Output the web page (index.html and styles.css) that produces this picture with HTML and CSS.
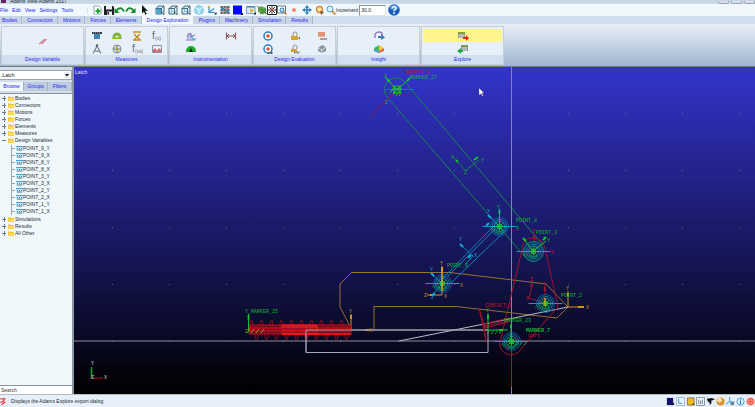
FILE: index.html
```html
<!DOCTYPE html>
<html lang="en">
<head>
<meta charset="utf-8">
<title>Adams View Adams 2017</title>
<link rel="stylesheet" href="styles.css">
</head>
<body>
<svg class="defs" aria-hidden="true">
  <symbol id="folder" viewBox="0 0 6 5"><path d="M0 .5h2.5l.7.6H6V5H0z" fill="#f2c230"/><path d="M.5 2H6V4.6H.5z" fill="#ffdc60"/></symbol>
  <symbol id="var" viewBox="0 0 7 5"><path d="M0 0h7v5H0z" fill="#c6e6f6"/><path d="M0 0h7v1H0z" fill="#4a9fd8"/><path d="M1 2.5h1m1 0h1m1 0h1M1 4h5" stroke="#4b6b82" stroke-width=".8"/></symbol>
  <symbol id="cube" viewBox="0 0 10 10"><path d="M1 3.5h5.5V9H1zM1 3.5 3.5 1H9L6.5 3.5M9 1v5.500L6.500 9" fill="#d8f0fa" stroke="#35566b" stroke-width=".9"/><path d="M3.500 1v5.500H9M3.500 6.500 1 9" stroke="#4b9cc0" stroke-width=".6" fill="none"/><path d="M7.500 9.500h2v-2z" fill="#111"/></symbol>
  <symbol id="hub" viewBox="-18 -12 36 24" overflow="visible"><g fill="none"><path d="M-17 0H17" stroke="#0c9fc4"/><circle r="9" stroke="#086fae" stroke-width=".8"/><circle r="7" stroke="#10a2c4" stroke-width=".8"/><circle r="5" stroke="#10b59b" stroke-width=".8"/><circle r="2.600" stroke="#10d040"/><path d="M-3-3 3 3M3-3-3 3M-4 0h8M0-4v8" stroke="#10d040" stroke-width=".8"/><path d="m-10 4 2-3m0 4 2-3m0 4 2-3m0 4 2-3m0 3 2-3m0 3 2-3m0 3 2-3" stroke="#089a32" stroke-width=".8"/></g></symbol>
  <symbol id="calc" viewBox="0 0 12 10"><path d="M1 1h7v6H1z" fill="#8b9b94"/><path d="M1 1h7v2H1z" fill="#829b45"/><path d="M2 4h5M2 6h5" stroke="#e7edf0" stroke-width=".8"/></symbol>
</svg>

<div class="app">
  <header>
    <div class="titlebar"><span class="logo"></span><span class="title">Adams View Adams 2017</span><span class="winbtns"><button aria-label="Minimize"></button><button aria-label="Maximize"></button><button aria-label="Close"></button></span></div>
    <div class="toolbar">
      <nav class="menu"><a href="#">File</a><a href="#">Edit</a><a href="#">View</a><a href="#">Settings</a><a href="#">Tools</a></nav>
      <div class="tools">
        <button aria-label="New"><svg viewBox="0 0 10 10"><path d="M1 1h5l2 2v6H1z" fill="#fff" stroke="#789" stroke-width=".7"/><path d="M5 3.500v5M2.500 6h5" stroke="#20a830" stroke-width="2"/></svg></button>
        <button aria-label="Save"><svg viewBox="0 0 10 10"><path d="M0 1h9l1 1v8H0z" fill="#222"/><path d="M2 1h6v3.500H2zM3 6.500h5V10H3z" fill="#e9eef2"/><path d="M3.500 7h1.500v2.500H3.500z" fill="#222"/></svg></button>
        <button class="turn" aria-label="Undo"><svg viewBox="0 0 10 10"><path d="M1.500 6Q6 0 9.500 6.500" fill="none" stroke="#158a28" stroke-width="1.700"/><path d="M0 3v5h5z" fill="#158a28"/></svg></button>
        <button class="turn" aria-label="Redo"><svg viewBox="0 0 10 10"><path d="M.5 6.500Q4 0 8.500 6" fill="none" stroke="#158a28" stroke-width="1.700"/><path d="M10 3v5H5z" fill="#158a28"/></svg></button>
        <button class="wide" aria-label="Select"><svg viewBox="0 0 10 10"><path d="m2 0 6 6-3-.2L6.800 9 5.300 9.700 4 6.500 2 8.500z" fill="#111"/></svg></button>
        <button class="pic" aria-label="Front view"><svg viewBox="0 0 10 10"><use href="#cube"/><path d="M1.500 4H6v4.500H1.500z" fill="#41a7d4"/></svg></button>
        <button class="pic" aria-label="Right view"><svg viewBox="0 0 10 10"><use href="#cube"/></svg></button>
        <button class="pic" aria-label="Top view"><svg viewBox="0 0 10 10"><use href="#cube"/></svg></button>
        <button class="pic" aria-label="Isometric view"><svg viewBox="0 0 10 10"><path d="m5 .5 4 2v5l-4 2-4-2v-5z" fill="#9bdcf4" stroke="#55b8dd" stroke-width=".8"/><path d="m1 2.500 4 2 4-2M5 4.500v5" fill="none" stroke="#e8faff"/></svg></button>
        <button class="pic" aria-label="Coordinate system"><svg viewBox="0 0 10 10"><path d="M2 1v6.500h6M2 7.500l5-4" fill="none" stroke="#3b91c4" stroke-width="1.200"/><path d="m.5 2.500 1.500-2 1.500 2z" fill="#e7a52b"/><path d="M7 9.500h2.500V7z" fill="#111"/></svg></button>
        <button class="pic" aria-label="Grid"><svg viewBox="0 0 10 10"><path d="M0 2h10M0 5h10M0 8h10M2 1v8M5 1v8M8 1v8" stroke="#345" stroke-width="1"/><path d="M1 3h3v2H1zM6 5h3v2H6z" fill="#388bc0"/><path d="m5 2 3 2M2 8l3-2" stroke="#d06d42"/></svg></button>
        <button class="pic" aria-label="Background color"><svg viewBox="0 0 10 10"><path d="M0 .5h9v9H0z" fill="#0505ff"/><path d="M7.500 10H10V7.500z" fill="#111"/></svg></button>
        <button class="pic" aria-label="Layout"><svg viewBox="0 0 10 10"><path d="M.5 1.500h8.500v7H.5z" fill="#d4e8f3" stroke="#6b8ba1" stroke-width=".8"/><path d="M1 1h8v1.600H1z" fill="#4f8dbd"/><path d="M4 4h3v3H4z" fill="#f1b535"/><path d="M7.500 9.500H10V7z" fill="#111"/></svg></button>
        <button class="snug" aria-label="Shade"><svg viewBox="0 0 10 10"><path d="m1 3 3-2 5 2v5L6 9.500 1 7z" fill="#62a84b"/><path d="m0 1 10 8M3 9l6-5" stroke="#477c39"/></svg></button>
        <button class="snug" aria-label="Fit"><svg viewBox="0 0 10 10"><path d="M.5.5h9v9h-9z" fill="#fff" stroke="#222"/><path d="m2 2 6 6M8 2 2 8M5 1v8M1 5h8" stroke="#272727" stroke-width=".9"/><path d="M4 4h2v2H4z" fill="#e43b32"/></svg></button>
        <button class="snug" aria-label="Zoom box"><svg viewBox="0 0 10 10"><path d="M.5 1h8v7h-8z" fill="#fff" stroke="#456" stroke-width=".8"/><circle cx="5" cy="5" r="2" fill="#bce4fb" stroke="#2b78b3"/><path d="m6.500 6.500 3 3" stroke="#b17b37" stroke-width="1.300"/></svg></button>
        <button class="pic" aria-label="Center"><svg viewBox="0 0 10 10"><circle cx="5" cy="5" r="2" fill="#f06b55" stroke="#ffc9bd"/></svg></button>
        <button class="pic" aria-label="Pan"><svg viewBox="0 0 10 10"><path d="M5 1v8M1 5h8" stroke="#2b81b7" stroke-width="1.500"/><path d="m3 3 2-3 2 3zM3 7l2 3 2-3zM3 3 0 5l3 2zM7 3l3 2-3 2z" fill="#2b81b7"/></svg></button>
        <button class="pic" aria-label="Rotate"><svg viewBox="0 0 10 10"><circle cx="4.500" cy="4.500" r="3" fill="#ffe2b0" stroke="#d68435" stroke-width="1.400"/><path d="m5 6 4 1-3 3z" fill="#835021"/></svg></button>
        <button class="snug" aria-label="Zoom"><svg viewBox="0 0 10 10"><circle cx="4" cy="4" r="3" fill="#d6f3ff" stroke="#499dce"/><path d="m6 6 3.500 3.500" stroke="#c6923b" stroke-width="1.800"/></svg></button>
        <label for="inc">Increment</label><input id="inc" type="text" value="30.0">
        <button class="help" aria-label="Help"><svg viewBox="0 0 12 12"><circle cx="6" cy="6" r="5.800" fill="#1c5fc2"/><ellipse cx="6" cy="3.500" rx="4" ry="2.500" fill="#5599e6"/><path d="M4 4.500Q4.300 2.700 6.200 2.700 8.200 2.800 8 4.500 7.800 5.500 6.600 6 6 6.300 6 7.500" fill="none" stroke="#fff" stroke-width="1.300"/><circle cx="6" cy="9.200" r=".9" fill="#fff"/></svg></button>
      </div>
    </div>
    <nav class="tabs"><a href="#">Bodies</a><a href="#">Connectors</a><a href="#">Motions</a><a href="#">Forces</a><a href="#">Elements</a><a href="#" class="on">Design Exploration</a><a href="#">Plugins</a><a href="#">Machinery</a><a href="#">Simulation</a><a href="#">Results</a></nav>
    <div class="ribbon">
      <section class="group"><div class="icons one">
        <button aria-label="Design variable"><svg viewBox="0 0 12 10"><path d="m2 8 5-5h3L5 8z" fill="#e7adb4"/><path d="m2 8 6-5M5 8l5-5" stroke="#a95362" stroke-width=".7"/></svg></button></div><h2>Design Variable</h2></section>
      <section class="group"><div class="icons four">
        <button aria-label="Distance"><svg viewBox="0 0 12 10"><path d="M1 1h10v2H1z" fill="#273747"/><path d="M3 3h6v5H3z" fill="#4381b3"/><path d="M2 2h1m1 0h1m1 0h1m1 0h1" stroke="#fff" stroke-width=".7"/></svg></button>
        <button aria-label="Angle"><svg viewBox="0 0 12 10"><path d="M1.500 8V6a4.500 4.500 0 0 1 9 0v2z" fill="#7fb62b"/><path d="M4 6.500a2 1.800 0 0 1 4 0z" fill="#edf5e3"/></svg></button>
        <button aria-label="Average"><svg viewBox="0 0 12 10"><path d="M2 1h8M3 3l6 6M9 3 3 9M2 9h8" stroke="#cc8d24" stroke-width="1.500"/></svg></button>
        <button aria-label="Function"><svg viewBox="0 0 12 10"><text x="1" y="8" class="fx">f</text><text x="4" y="9" class="fs">(x)</text></svg></button>
        <button aria-label="Compass"><svg viewBox="0 0 12 10"><path d="M2 9.500 6 2l4 7.500M3.500 6.500Q6 8 8.500 6.500" fill="none" stroke="#737f88" stroke-width="1.100"/><circle cx="6" cy="1.500" r="1.200" fill="#56636c"/></svg></button>
        <button aria-label="Orientation"><svg viewBox="0 0 12 10"><circle cx="6" cy="5" r="4" fill="#dce3e7" stroke="#82909b"/><path d="M6 1v8M2 5h8" stroke="#68798a"/><path d="M4 3h2v2H4zM6 5h2v2H6z" fill="#c8b63a"/></svg></button>
        <button aria-label="Function measure"><svg viewBox="0 0 12 10"><text x="1" y="8" class="fx">f</text><text x="4" y="9" class="fs">(xs)</text></svg></button>
        <button aria-label="Plot"><svg viewBox="0 0 12 10"><path d="M1.500 1.500h9v7h-9z" fill="#e6edf5" stroke="#8793a4"/><path d="m2 6 2-2 2 3 2-3 2 2v2H2z" fill="#d96763"/></svg></button></div><h2>Measures</h2></section>
      <section class="group"><div class="icons two">
        <button aria-label="Point trace"><svg viewBox="0 0 12 10"><path d="M2 2h4v6H2z" fill="#c3b9e4"/><path d="M1 9h9M2 6q5-8 4 0l4-2" stroke="#8172b8" fill="none"/><path d="M7 4v4h4" stroke="#329fc1" fill="none"/></svg></button>
        <button aria-label="Span"><svg viewBox="0 0 12 10"><path d="M1.500 1.500v7M10.500 1.500v7M2 5h8" stroke="#98534f" stroke-width="1.100"/><path d="m4 3-2 2 2 2m4-4 2 2-2 2" fill="none" stroke="#98534f"/></svg></button>
        <button aria-label="Gauge"><svg viewBox="0 0 12 10"><path d="M1 7a5 5 0 0 1 10 0v1H1z" fill="#1dad29"/><path d="M4 8 6 4l2 4z" fill="#222"/></svg></button></div><h2>Instrumentation</h2></section>
      <section class="group"><div class="icons three">
        <button aria-label="Objective"><svg viewBox="0 0 12 10"><circle cx="6" cy="5" r="4" fill="#fff" stroke="#277ebc" stroke-width="1.500"/><circle cx="6" cy="5" r="1.800" fill="#df5333"/></svg></button>
        <button aria-label="Constraint"><svg viewBox="0 0 12 10"><path d="M4 5V3q0-2 2-2t2 2v2" fill="none" stroke="#929292"/><path d="M2 5h7v4H2z" fill="#dba52d"/><path d="M9 8h2V5z" fill="#68747d"/></svg></button>
        <button aria-label="Report"><svg viewBox="0 0 12 10"><path d="M2 1h7v5H2z" fill="#f2b092"/><path d="M2 2h7M2 4h7" stroke="#d9774f"/><path d="M4 8h7" stroke="#a0a2a4" stroke-width="2"/></svg></button>
        <button aria-label="Objective macro"><svg viewBox="0 0 12 10"><circle cx="6" cy="5" r="4" fill="#fff" stroke="#277ebc" stroke-width="1.500"/><circle cx="6" cy="5" r="1.700" fill="#df5333"/><path d="M6 9h5" stroke="#555" stroke-width="2" stroke-dasharray="1 .5"/></svg></button>
        <button aria-label="Constraint macro"><svg viewBox="0 0 12 10"><path d="M4 5V3q0-2 2-2t2 2v2" fill="none" stroke="#929292"/><path d="M2 5h6v3H2z" fill="#dba52d"/><path d="M5 8.500h6" stroke="#777" stroke-width="2" stroke-dasharray="1 .5"/></svg></button>
        <button aria-label="Evaluate"><svg viewBox="0 0 12 10"><path d="m2 4 4-3 4 2v4L6 9 2 7z" fill="#89969d"/><path d="m2 4 4 2 4-3M6 6v3" stroke="#d8dde0" fill="none"/></svg></button></div><h2>Design Evaluation</h2></section>
      <section class="group"><div class="icons stack">
        <button aria-label="Export insight"><svg viewBox="0 0 12 10"><path d="M2 7q-1-6 4-6 4 0 3 4" fill="none" stroke="#9d7ac4" stroke-width="1.500"/><path d="M5 5h3V3l4 3.500L8 9V7H5z" fill="#427ab6"/></svg></button>
        <button aria-label="Insight results"><svg viewBox="0 0 12 10"><path d="m1 4 5-3v8L1 7z" fill="#42bc61"/><path d="m6 1 5 3-5 3z" fill="#f1cd35"/><path d="m11 4-5 3v2l5-2z" fill="#e86046"/><path d="M1 5l5 2v2L1 7z" fill="#4a9ce0"/></svg></button></div><h2>Insight</h2></section>
      <section class="group"><div class="icons stack">
        <button class="hot" aria-label="Export to Explore"><svg viewBox="0 0 12 10"><use href="#calc"/><path d="M6 6h3V4l3 3-3 3V8H6z" fill="#ed2025"/></svg></button>
        <button aria-label="Import from Explore"><svg viewBox="0 0 12 10"><g transform="translate(3)"><use href="#calc"/></g><path d="M6 6H4V4L0 7l4 3V8h2z" fill="#20a746"/></svg></button></div><h2>Explore</h2></section>
    </div>
  </header>

  <main>
    <aside>
      <div class="picker"><select aria-label="Model"><option>.Latch</option></select><svg viewBox="0 0 6 6"><path d="M0 0h6v6H0z" fill="#e9eef2"/><path d="M1 2h4L3 4.500z" fill="#111"/></svg></div>
      <nav class="sidetabs"><a href="#" class="on">Browse</a><a href="#">Groups</a><a href="#">Filters</a></nav>
      <ul class="tree">
        <li><i class="box"></i><svg class="fold"><use href="#folder"/></svg>Bodies</li>
        <li><i class="box"></i><svg class="fold"><use href="#folder"/></svg>Connectors</li>
        <li><i class="box"></i><svg class="fold"><use href="#folder"/></svg>Motions</li>
        <li><i class="box"></i><svg class="fold"><use href="#folder"/></svg>Forces</li>
        <li><i class="box"></i><svg class="fold"><use href="#folder"/></svg>Elements</li>
        <li><i class="box"></i><svg class="fold"><use href="#folder"/></svg>Measures</li>
        <li><i class="box open"></i><svg class="fold"><use href="#folder"/></svg>Design Variables</li>
        <li class="branch"><ul>
          <li><svg class="var"><use href="#var"/></svg>POINT_9_Y</li>
          <li><svg class="var"><use href="#var"/></svg>POINT_9_X</li>
          <li><svg class="var"><use href="#var"/></svg>POINT_8_Y</li>
          <li><svg class="var"><use href="#var"/></svg>POINT_8_X</li>
          <li><svg class="var"><use href="#var"/></svg>POINT_3_Y</li>
          <li><svg class="var"><use href="#var"/></svg>POINT_3_X</li>
          <li><svg class="var"><use href="#var"/></svg>POINT_2_Y</li>
          <li><svg class="var"><use href="#var"/></svg>POINT_2_X</li>
          <li><svg class="var"><use href="#var"/></svg>POINT_1_Y</li>
          <li><svg class="var"><use href="#var"/></svg>POINT_1_X</li>
        </ul></li>
        <li><i class="box"></i><svg class="fold"><use href="#folder"/></svg>Simulations</li>
        <li><i class="box"></i><svg class="fold"><use href="#folder"/></svg>Results</li>
        <li><i class="box"></i><svg class="fold"><use href="#folder"/></svg>All Other</li>
      </ul>
      <input class="search" type="text" aria-label="Search" placeholder="Search">
    </aside>

    <div class="viewport">
      <svg class="scene" viewBox="74 67 681 327" preserveAspectRatio="xMinYMin slice" role="img" aria-label="Latch model">
        <defs><pattern id="dots" x="112" y="113" width="57" height="57" patternUnits="userSpaceOnUse"><path d="M0 0h1v1H0z" fill="#8f9bd0" opacity=".55"/></pattern></defs>
        <path d="M74 67h681v327H74z" fill="url(#dots)"/>
        <g fill="none">
          <!-- handle link -->
          <g stroke="#178451" stroke-width="1">
            <path d="M387 97 526 258M405 82 542 244M387 97A11 11 0 0 1 405 82"/>
            <path d="M386 89.500h28"/><circle cx="533.500" cy="251.500" r="10"/>
            <path d="M465.500 170.500 453 157m12.500 13.500L479 160"/>
          </g>
          <g stroke="#14c42c"><path d="M397 90 385 77m12 13 13-12"/><path d="m387 79 3 3m17-1 3-3M456 160l2 2m16-2 4-3" stroke-width="1.800"/><circle cx="397" cy="89.500" r="3.500"/><path d="m393 86 8 7m0-7-8 7m-1-4h10M394 85v9m6-9v9"/><path d="m390 93 2-3m1 5 2-3m1 4 2-4m1 4 2-4"/></g>
          <path d="m369 118 17-18 7-6" stroke="#842057"/>
          <!-- datum axes -->
          <path d="M511.500 67v327" stroke="#8383bb"/><path d="M74 341h681" stroke="#8e8e9c"/>
          <path d="M511.500 341v46" stroke="#a41727"/>
          <!-- hook -->
          <g stroke="#967034"><path d="m351.500 329-11.500-22v-23l11.500-11.500H450l96 11.500 22 23-11 11-101-11.500h-82V330"/></g>
          <g stroke="#d39216"><path d="M568 307v-16m0 16h16M442 284v-18m0 29h-15m15 0v-11M351 330v-16m0 16h-1"/><path d="M568 293v3m10 11h6M442 267v4M430 295h3M351 315v4M365 330h4" stroke-width="2"/></g>
          <!-- ground block -->
          <path d="M306 330h182v22.500H306z" stroke="#a9a9b2"/>
          <path d="m399 341 85-17 84-17" stroke="#b9b9c9"/>
          <!-- spring -->
          <path d="M249 330q2.500-20 5 0t5 0 5 0 5 0 5 0 5 0 5 0 5 0 5 0 5 0 5 0 5 0 5 0 5 0 5 0 5 0 5 0 5 0 5 0 5 0" stroke="#980c20"/>
          <path d="M249 325h102v9H249z" fill="#74091b" stroke="#bd1221"/><path d="M249 328h102M249 331h102" stroke="#df1522"/>
          <path d="M282 325h35v9h-35z" fill="#d91422" stroke="#f01822"/><path d="M282 329h35m-35 3h35" stroke="#700b1a"/><path d="M282 334h69" stroke="#ff1717" stroke-width="1.500"/>
          <path d="M306 330h182M306 330v22.500" stroke="#9e9eab"/>
          <path d="M248.500 331v-17" stroke="#13c42c"/><path d="M248.500 315v5" stroke="#13c42c" stroke-width="1.800"/><path d="m247 333 3-4m1 4 3-4m2 4 3-4m2 4 3-4" stroke="#7aa325"/>
          <!-- pivot and slider -->
          <g stroke="#9d152d"><path d="M522 250q0-12 11-12 9 0 12 10l13 59-37 42a11 11 0 0 1-20-11zM532.500 283.500 529 298l17 6M534 251v-17M545 304v-18M479 308l5 17 2 16zM484 324l25-6m-25 8 25-5m-25 7 25-6"/><path d="M534 236v3M545 287v4M532 284l-1 3M483 325l4 3" stroke-width="2"/></g>
          <!-- coupler -->
          <g stroke="#0a87b5"><path d="m495 225-54 55m65-50-56 54m45-55-47 47M499 226l-11-11m-28 29 13 12-8 9M442 284l-11-11m11 11-10 11"/><path d="m488 215 3 3m-31 26 3 3m-32 26 3 3m-2 20 3-3m36-38-3 3m21-35-3 3" stroke-width="1.900" stroke="#12a8d3"/></g>
        </g>
        <use href="#hub" x="481.500" y="214.500" width="36" height="24"/><use href="#hub" x="424.500" y="271.500" width="36" height="24"/><use href="#hub" x="515.500" y="239.500" width="36" height="24"/><use href="#hub" x="527.500" y="291.500" width="36" height="24"/><use href="#hub" x="493.500" y="329.500" width="36" height="24"/>
        <g fill="none" stroke="#12c52c"><path d="M499.500 226v-17M488 330v-17m0 17h20M533 251l-10-13m10 13 13-10M511 341v-17"/><path d="M499.500 210v4M488 315v4M523 238l3 3m17-1 3-3M511 325v3M499 330h4" stroke-width="1.900"/><path d="m487 334 3-4m1 4 3-4m1 4 3-4m1 4 3-4M516 345l3-4m1 4 3-4m1 4 3-4" stroke-width=".8"/></g>
        <path d="M442 267v24M545 298v8" stroke="#e5ab17" stroke-width="1.200"/>
        <!-- view triad -->
        <path d="M91.500 378v-11" stroke="#10a928" stroke-width="1.500"/><path d="M91.500 378H103" stroke="#b41a22"/>
        <g class="tags">
          <g class="green"><text x="410" y="79">MARKER_27</text><text x="516" y="222">POINT_8</text><text x="536" y="234">POINT_3</text><text x="447" y="267">POINT_9</text><text x="561" y="297">POINT_2</text><text x="504" y="322">MARKER_23</text><text x="526" y="332" class="heavy">MARKER_7</text><text x="245" y="313">Y_MARKER_25</text><text x="245" y="333">Z</text><text x="384" y="78">X</text><text x="451" y="159">X</text><text x="481" y="162">Y</text><text x="464" y="174">Z</text><text x="497" y="209">Y</text><text x="516" y="230">X</text><text x="486" y="312">Y</text><text x="547" y="242">Y</text><text x="385" y="104">Z</text></g>
          <g class="red"><text x="405" y="74">SFORCE_1</text><text x="485" y="307">CONTACT_1</text><text x="528" y="337">part</text><text x="551" y="254">X</text><text x="532" y="233">Y</text><text x="530" y="281">Z</text><text x="526" y="300">X</text><text x="543" y="286">Y</text></g>
          <g class="orange"><text x="566" y="290">Y</text><text x="586" y="309">X</text><text x="460" y="287">X</text><text x="440" y="265">Y</text><text x="424" y="297">Z</text><text x="444" y="298">X</text><text x="349" y="313">Y</text><text x="369" y="332">X</text></g>
          <g class="cyan"><text x="487" y="213">Y</text><text x="459" y="241">Y</text><text x="474" y="257">X</text><text x="430" y="271">Y</text><text x="431" y="299">Z</text></g>
          <g class="pale"><text x="91" y="365">Y</text><text x="104" y="379">X</text><text x="91" y="379">Z</text></g>
        </g>
        <text x="75" y="74" class="model">Latch</text>
        <path d="m479 88 5 5-2 .2 1.300 2.500-1 .6-1.300-2.600-2 1.500z" fill="#fff" stroke="#333" stroke-width=".3"/>
      </svg>
    </div>
  </main>

  <footer>
    <svg class="mark" viewBox="0 0 6 8"><path d="M0 1h5L3 4l2 1-4 3M3 4 0 5" fill="none" stroke="#ea3434" stroke-width="1.300"/></svg>
    <span>Displays the Adams Explore export dialog</span>
    <div class="status">
      <button aria-label="Color"><svg viewBox="0 0 10 10"><path d="M1 1h7v8H1z" fill="#111272"/><path d="M6 9h3V6z" fill="#111"/></svg></button>
      <button aria-label="Axes"><svg viewBox="0 0 10 10"><path d="M.5.500h9v9h-9z" fill="#eaf6fd" stroke="#8ca3b6" stroke-width=".8"/><path d="M3 2v5h4" fill="none" stroke="#348bcc"/></svg></button>
      <button aria-label="Model"><svg viewBox="0 0 10 10"><path d="M1.500 1h7.500v8H1.500z" fill="#f4b91b" stroke="#7a7665"/><path d="M6 9h3V6z" fill="#735216"/></svg></button>
      <button aria-label="Table"><svg viewBox="0 0 10 10"><path d="M.5.500h9v9h-9z" fill="#eef4f7" stroke="#7c909e"/><path d="M3 3v5m2-4v4m2-5v5" stroke="#73808c"/></svg></button>
      <button aria-label="Render"><svg viewBox="0 0 10 10"><path d="m1 2 6-1 3 2-4 1v3L4 9V6L2 5z" fill="#111"/></svg></button>
      <button aria-label="Sphere"><svg viewBox="0 0 10 10"><circle cx="5" cy="5" r="4.500" fill="#d9942f"/><circle cx="4" cy="3.500" r="2.600" fill="#ffe1a1"/></svg></button>
      <button aria-label="Lock frame"><svg viewBox="0 0 10 10"><path d="M4 0v5L0 8m4-3 5 2" fill="none" stroke="#52b4df" stroke-width="1.400"/><path d="M5 5h4v4H5z" fill="#6c8496"/></svg></button>
      <button aria-label="Information"><svg viewBox="0 0 10 10"><circle cx="5" cy="5" r="4" fill="#e9f7ff" stroke="#3b97d5"/><path d="M5 4v4M5 2v1" stroke="#247fc2" stroke-width="1.300"/></svg></button>
      <button aria-label="Stop"><svg viewBox="0 0 10 10"><circle cx="5" cy="5" r="4.200" fill="#ee4938" stroke="#f9a79b"/><circle cx="5" cy="5" r="2" fill="none" stroke="#ffc1b5"/></svg></button>
    </div>
  </footer>
</div>
</body>
</html>
```
FILE: styles.css
```css
* { box-sizing: border-box; }
body { margin: 0; font: 5px/7px "Liberation Sans", Arial, sans-serif; color: #222b32; }
button { padding: 0; border: 0; background: none; display: grid; place-items: center; }
svg { display: block; }
a { color: #2626ef; text-decoration: none; }
ul { list-style: none; margin: 0; padding: 0; }
.defs { position: absolute; width: 0; height: 0; }

.app { height: 100vh; display: flex; flex-direction: column; overflow: hidden; background: #e7eff8; }

.titlebar { height: 4px; display: flex; align-items: flex-end; overflow: hidden; background: linear-gradient(#c5d3e3, #ccdceb); }
.logo { width: 5px; height: 3px; margin: 0 4px 1px 1px; background: #622463; }
.title { line-height: 6px; }
.winbtns { margin-left: auto; display: flex; gap: 2px; }
.winbtns button { width: 11px; height: 3px; border: 1px solid #9aa3b2; border-top: 0; border-radius: 0 0 2px 2px; background: #d7dee8; }

.toolbar { height: 12px; display: flex; align-items: center; background: #f0f8fc; }
.menu { width: 88px; display: flex; gap: 4px; border-right: 1px solid #d7e2ea; }
.tools { display: flex; align-items: center; padding-left: 4px; }
.tools button { width: 11px; }
.tools svg { width: 10px; height: 10px; }
.tools .turn svg { width: 11px; }
.tools .wide { width: 17px; }
.tools .pic { width: 13px; }
.tools .snug { width: 10px; }
.tools label { color: #222; }
.tools input { width: 27px; height: 11px; margin: 0 2px 0 1px; padding: 0 1px; border: 1px solid #8b949a; border-right-color: #e0e4e6; border-bottom-color: #e0e4e6; background: #fff; font: inherit; color: #222; }
.tools .help, .tools .help svg { width: 12px; height: 12px; }

.tabs { height: 8px; display: flex; background: #d0dff0; }
.tabs a { padding: 0 4px 0 5px; line-height: 9px; border-right: 1px solid #a9b9cb; background: #c7d5e6; }
.tabs a:first-child { padding-left: 2px; }
.tabs .on { background: #f2f8fc; border-color: #f2f8fc; }

.ribbon { height: 42px; display: flex; gap: 1px; padding: 2px 0 1px 1px; background: linear-gradient(#e9eff7, #c5d3e2 50%, #9fb5cf); }
.group { width: 83px; display: flex; flex-direction: column; border: 1px solid #c5cdd6; background: #e7eff9; }
.group h2 { margin: 0; height: 9px; font-size: 5px; line-height: 8px; font-weight: 400; text-align: center; color: #2626ef; background: #d1dff1; }
.icons { flex: 1; display: grid; grid-template-rows: 13px 13px; justify-content: center; padding-top: 2px; }
.icons svg { width: 12px; height: 10px; }
.one { grid-template-rows: 24px; }
.four { grid-template-columns: repeat(4, 20px); }
.two { grid-template-columns: repeat(2, 40px); }
.three { grid-template-columns: repeat(3, 27px); }
.stack { grid-template-columns: 79px; }
.hot { background: #fff38b; }
.fx { font: 10px "Liberation Sans", sans-serif; fill: #646c73; }
.fs { font: 5px "Liberation Sans", sans-serif; fill: #646c73; }

main { flex: 1; min-height: 0; display: flex; border-top: 1px solid #737b84; }
aside { width: 74px; display: flex; flex-direction: column; padding-top: 3px; background: #d4deeb; border-right: 2px solid #8c96a2; }
.picker { height: 10px; display: flex; align-items: center; padding-right: 1px; background: #fff; border: 1px solid #9aa5ad; border-left: 0; }
.picker select { flex: 1; min-width: 0; appearance: none; border: 0; padding: 0 1px; background: none; font: inherit; color: #222; }
.picker svg { width: 6px; height: 6px; }
.sidetabs { display: flex; margin-top: 2px; height: 9px; }
.sidetabs a { flex: 1; text-align: center; line-height: 9px; background: #bdcddf; border-right: 1px solid #a3b2c3; }
.sidetabs .on { background: #f0f8fc; }
.tree { flex: 1; min-height: 0; margin-top: 2px; padding: 1px 0 0 2px; border-top: 1px solid #87929c; background: #f0f8fc; }
.tree li { height: 7px; display: flex; align-items: center; white-space: nowrap; }
.tree .branch { display: block; height: auto; padding: 1px 0 1px 9px; }
.branch ul { border-left: 1px solid #9aa5ac; }
.branch li::before { content: ""; width: 3px; height: 1px; margin-right: 1px; background: #9aa5ac; }
.box { width: 4px; height: 5px; margin-right: 2px; background: linear-gradient(#717b82, #717b82) 50% 50% / 4px 1px no-repeat, linear-gradient(#717b82, #717b82) 50% 50% / 1px 5px no-repeat; }
.box.open { background: linear-gradient(#717b82, #717b82) 50% 50% / 4px 1px no-repeat; }
.fold { width: 6px; height: 5px; margin-right: 1px; }
.var { width: 7px; height: 5px; }
.search { width: 100%; height: 9px; padding: 0 1px; border: 0; border-top: 1px solid #87929c; background: #fff; font: inherit; color: #333; }
.search::placeholder { color: #333; opacity: 1; }

.viewport { flex: 1; min-width: 0; background: linear-gradient(#3333cc, #1a1a68 50%, #000); }
.scene { width: 100%; height: 100%; }
.tags { font: 5px "Liberation Mono", monospace; }
.heavy { font-weight: 700; }
.green { fill: #12b52c; }
.red { fill: #c51525; }
.orange { fill: #c98d1c; }
.cyan { fill: #13a1cf; }
.pale { fill: #ccc; }
.model { font: 5px "Liberation Sans", sans-serif; fill: #e6e6fa; }

footer { height: 13px; display: flex; align-items: center; gap: 5px; border-top: 1px solid #b3bdc7; background: #e7eff9; }
.mark { width: 6px; height: 7px; }
.status { margin-left: auto; display: flex; gap: 1px; }
.status button, .status svg { width: 9px; height: 9px; }
```
